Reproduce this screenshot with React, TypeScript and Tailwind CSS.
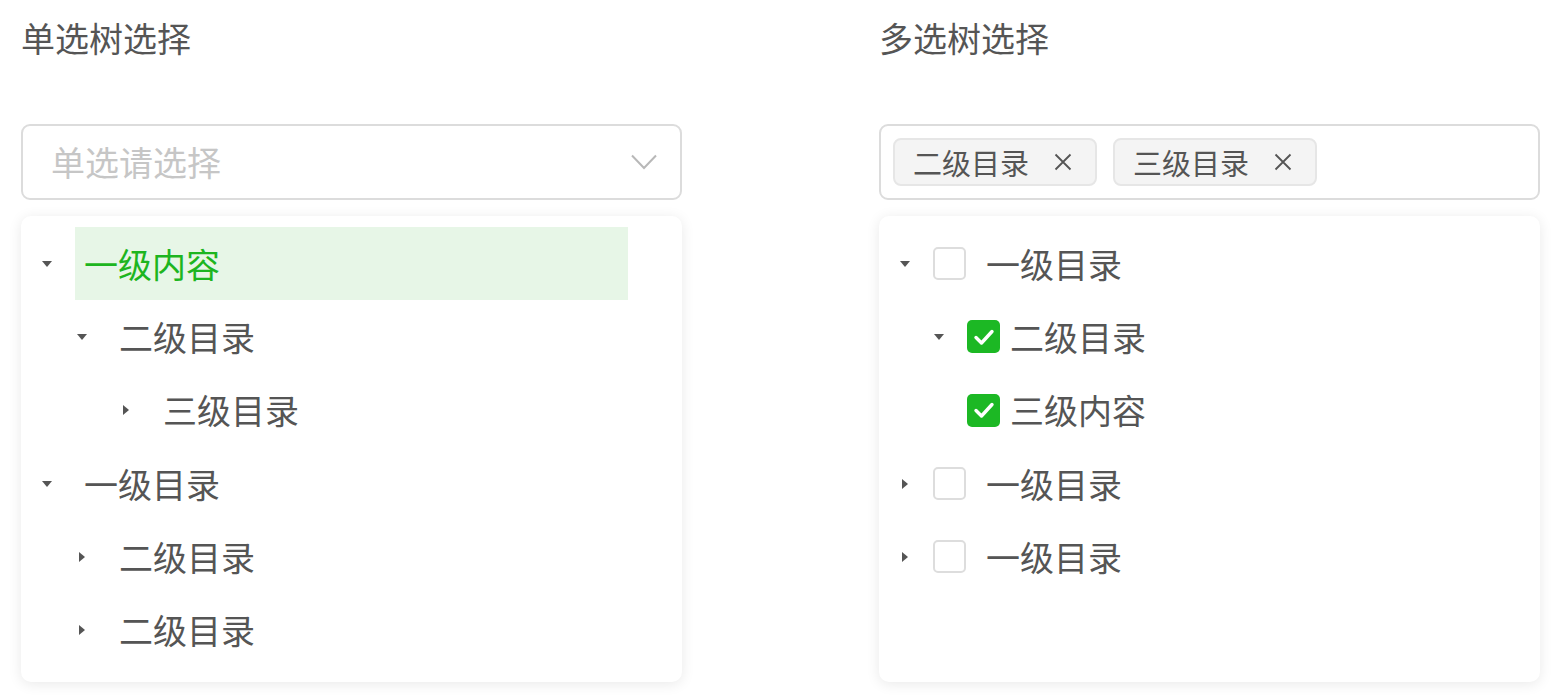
import React from "react";

type Node = {
  label: string;
  level: number;
  caret?: "down" | "right";
  active?: boolean;
  checked?: boolean;
};

const singleTree: Node[] = [
  { label: "一级内容", level: 1, caret: "down", active: true },
  { label: "二级目录", level: 2, caret: "down" },
  { label: "三级目录", level: 3, caret: "right" },
  { label: "一级目录", level: 1, caret: "down" },
  { label: "二级目录", level: 2, caret: "right" },
  { label: "二级目录", level: 2, caret: "right" },
];

const multiTree: Node[] = [
  { label: "一级目录", level: 1, caret: "down" },
  { label: "二级目录", level: 2, caret: "down", checked: true },
  { label: "三级内容", level: 2, checked: true },
  { label: "一级目录", level: 1, caret: "right" },
  { label: "一级目录", level: 1, caret: "right" },
];

const Caret = ({ dir }: { dir?: "down" | "right" }) => (
  <span className="w-[28px] h-full flex items-center justify-center shrink-0">
    {dir === "down" && (
      <svg width="10" height="6" viewBox="0 0 10 6">
        <path d="M0 0 L10 0 L5 6 Z" fill="#555" />
      </svg>
    )}
    {dir === "right" && (
      <svg width="6" height="10" viewBox="0 0 6 10">
        <path d="M0 0 L6 5 L0 10 Z" fill="#555" />
      </svg>
    )}
  </span>
);

const Checkbox = ({ checked }: { checked?: boolean }) =>
  checked ? (
    <span className="ml-[14px] w-[33px] h-[33px] rounded-[5px] bg-[#1cb824] flex items-center justify-center shrink-0">
      <svg width="26" height="26" viewBox="0 0 26 26">
        <path d="M5 13.5 L10.5 19 L21 7.5" fill="none" stroke="#fff" strokeWidth="3.4" strokeLinecap="round" strokeLinejoin="round" />
      </svg>
    </span>
  ) : (
    <span className="ml-[14px] block w-[33px] h-[33px] rounded-[5px] border-2 border-[#dddddd] bg-white shrink-0" />
  );

const Tag = ({ label }: { label: string }) => (
  <span className="h-[48px] flex items-center border-2 border-[#e6e6e6] bg-[#f4f4f4] rounded-[8px] pl-[18px] pr-[23px] text-[29px] leading-none text-[#555]">
    {label}
    <svg className="ml-[25px]" width="18" height="18" viewBox="0 0 18 18">
      <path d="M1.5 1.5 L16.5 16.5 M16.5 1.5 L1.5 16.5" stroke="#555" strokeWidth="1.8" />
    </svg>
  </span>
);

const indent: Record<number, string> = { 1: "pl-[12px]", 2: "pl-[47px]", 3: "pl-[91px]" };
const multiIndent: Record<number, string> = { 1: "pl-[12px]", 2: "pl-[46px]" };

export default function App() {
  return (
    <div
      className="min-h-screen bg-white flex gap-[197px] pl-[21px] pt-[21px] text-[#555]"
      style={{ fontFamily: '"Noto Sans CJK SC", "Noto Sans", sans-serif' }}
    >
      {/* 单选 */}
      <div className="w-[661px]">
        <h2 className="text-[34px] leading-[34px]">单选树选择</h2>
        <div className="mt-[69px] h-[76px] border-2 border-[#dcdcdc] rounded-[9px] flex items-center justify-between pl-[28px] pr-[23px]">
          <span className="text-[34px] leading-none text-[#c6c6c6]">单选请选择</span>
          <svg width="26" height="16" viewBox="0 0 26 16">
            <path d="M1 1.5 L13 14 L25 1.5" fill="none" stroke="#b8b8b8" strokeWidth="2" />
          </svg>
        </div>
        <div className="mt-[16px] h-[466px] bg-white rounded-[10px] shadow-[0_2px_14px_rgba(0,0,0,0.09)] pt-[11px]">
          {singleTree.map((n, i) => (
            <div key={i} className={`h-[73.3px] flex items-center ${indent[n.level]}`}>
              <Caret dir={n.caret} />
              <div
                className={`ml-[14px] h-full flex items-center px-[9px] text-[34px] leading-none ${
                  n.active ? "w-[553px] bg-[#e7f6e7] text-[#1db520]" : ""
                }`}
              >
                {n.label}
              </div>
            </div>
          ))}
        </div>
      </div>

      {/* 多选 */}
      <div className="w-[661px]">
        <h2 className="text-[34px] leading-[34px]">多选树选择</h2>
        <div className="mt-[69px] h-[76px] border-2 border-[#dcdcdc] rounded-[9px] flex items-center gap-[16px] pl-[12px]">
          <Tag label="二级目录" />
          <Tag label="三级目录" />
        </div>
        <div className="mt-[16px] h-[466px] bg-white rounded-[10px] shadow-[0_2px_14px_rgba(0,0,0,0.09)] pt-[11px]">
          {multiTree.map((n, i) => (
            <div key={i} className={`h-[73.3px] flex items-center ${multiIndent[n.level]}`}>
              <Caret dir={n.caret} />
              <Checkbox checked={n.checked} />
              <span className={`text-[34px] leading-none ${n.level === 1 ? "ml-[20px]" : "ml-[10px]"}`}>{n.label}</span>
            </div>
          ))}
        </div>
      </div>
    </div>
  );
}
